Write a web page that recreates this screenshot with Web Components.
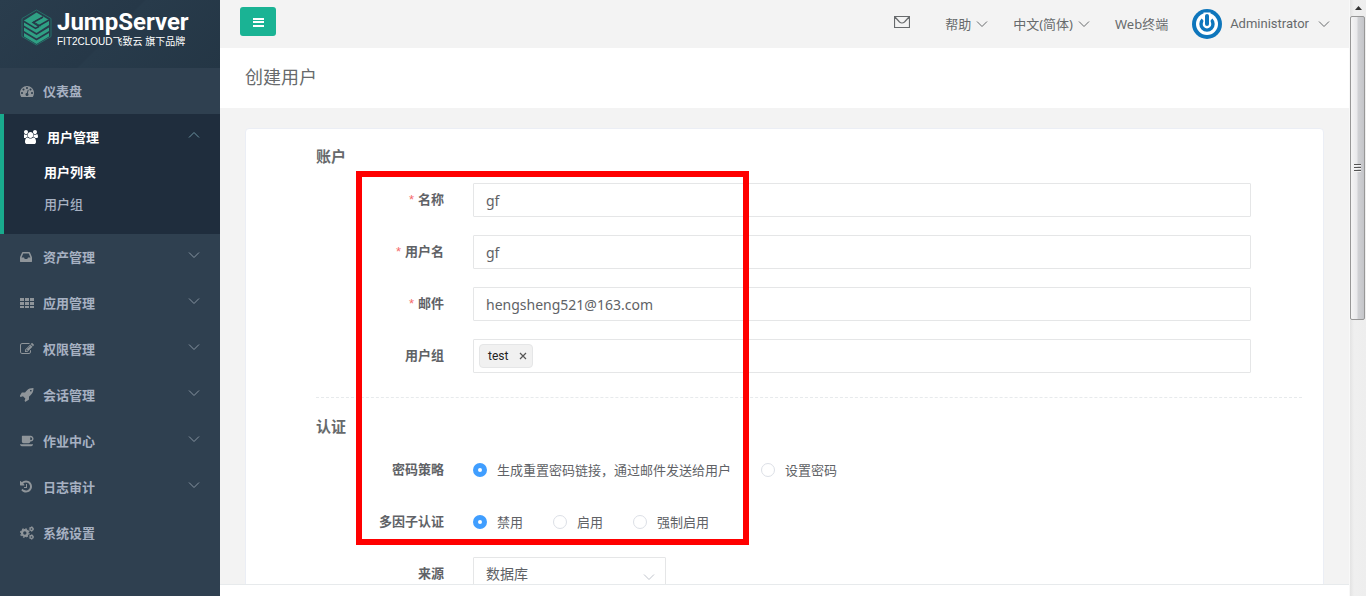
<!DOCTYPE html>
<html lang="zh-CN">
<head>
<meta charset="utf-8">
<title>创建用户 - JumpServer</title>
<style>
  html, body { margin: 0; height: 100%; }
  body {
    font: 13px/20px "Noto Sans", "Noto Sans CJK SC", sans-serif;
    color: #676a6c;
    overflow: hidden;
  }
</style>
</head>
<body>
<js-app></js-app>

<script>
const define = (name, html, init) => {
  const template = document.createElement('template');
  template.innerHTML = html;
  customElements.define(name, class extends HTMLElement {
    constructor() {
      super();
      this.attachShadow({ mode: 'open' }).append(template.content.cloneNode(true));
    }
    connectedCallback() {
      if (init && !this.ready) { this.ready = true; init(this, this.shadowRoot); }
    }
  });
};

/* Icon set: [viewBox, markup] */
const ICONS = {
  dashboard: ['0 0 1792 1792', '<path d="M384 1152q0-53-37.500-90.500t-90.500-37.500-90.500 37.500-37.500 90.500 37.500 90.500 90.500 37.500 90.500-37.500 37.500-90.500zm192-448q0-53-37.500-90.500t-90.500-37.500-90.500 37.500-37.500 90.500 37.500 90.500 90.500 37.500 90.500-37.500 37.500-90.500zm428 481l101-382q6-26-7.500-48.500t-38.500-29.500-48 6.500-30 39.500l-101 382q-60 5-107 43.500t-63 98.500q-20 77 20 146t117 89 146-20 89-117q16-60-6-117t-72-91zm660-33q0-53-37.500-90.500t-90.500-37.500-90.500 37.500-37.500 90.500 37.500 90.500 90.500 37.500 90.500-37.500 37.500-90.500zm-640-640q0-53-37.500-90.500t-90.500-37.500-90.500 37.500-37.500 90.500 37.500 90.500 90.500 37.500 90.500-37.500 37.500-90.500zm448 192q0-53-37.500-90.500t-90.500-37.500-90.500 37.500-37.500 90.500 37.500 90.500 90.500 37.500 90.500-37.500 37.500-90.500zm320 448q0 261-141 483-19 29-54 29h-1402q-35 0-54-29-141-221-141-483 0-182 71-348t191-286 286-191 348-71 348 71 286 191 191 286 71 348z"/>'],
  users: ['64 0 1792 1792', '<path d="M529 896q-162 5-265 128h-134q-82 0-138-40.500t-56-118.500q0-353 124-353 6 0 43.500 21t97.500 42.500 119 21.500q67 0 133-23-5 37-5 66 0 139 81 256zm1071 637q0 120-73 189.500t-194 69.500h-874q-121 0-194-69.500t-73-189.500q0-53 3.500-103.500t14-109 26.500-108.500 43-97.500 62-81 85.500-53.500 111.500-20q10 0 43 21.500t73 48 107 48 135 21.500 135-21.500 107-48 73-48 43-21.500q61 0 111.500 20t85.500 53.500 62 81 43 97.500 26.500 108.500 14 109 3.500 103.500zm-1024-1277q0 106-75 181t-181 75-181-75-75-181 75-181 181-75 181 75 75 181zm704 384q0 159-112.500 271.500t-271.500 112.500-271.500-112.500-112.500-271.500 112.500-271.500 271.500-112.500 271.500 112.500 112.500 271.500zm576 225q0 78-56 118.500t-138 40.500h-134q-103-123-265-128 81-117 81-256 0-29-5-66 66 23 133 23 59 0 119-21.500t97.500-42.500 43.500-21q124 0 124 353zm-128-609q0 106-75 181t-181 75-181-75-75-181 75-181 181-75 181 75 75 181z"/>'],
  inbox: ['128 0 1792 1792', '<path d="M1151 960h316q-1-3-2.500-8.500t-2.500-7.500l-212-496h-708l-212 496q-1 3-2.500 8.500t-2.500 7.500h316l95 192h320zm513 30v482q0 26-19 45t-45 19h-1408q-26 0-45-19t-19-45v-482q0-62 25-123l238-552q10-25 36.500-42t52.500-17h832q26 0 52.500 17t36.500 42l238 552q25 61 25 123z"/>'],
  grid: ['0 0 14 14', '<path d="M0 2h4v3H0zM5 2h4v3H5zM10 2h4v3h-4zM0 6h4v3H0zM5 6h4v3H5zM10 6h4v3h-4zM0 10h4v2H0zM5 10h4v2H5zM10 10h4v2h-4z"/>'],
  edit: ['0 0 1792 1792', '<path d="M888 1184l116-116-152-152-116 116v56h96v96h56zm440-720q-16-16-33 1l-350 350q-17 17-1 33t33-1l350-350q17-17 1-33zm80 594v190q0 119-84.500 203.500t-203.500 84.500h-832q-119 0-203.500-84.500t-84.500-203.500v-832q0-119 84.500-203.500t203.500-84.500h832q63 0 117 25 15 7 18 23 3 17-9 29l-49 49q-14 14-32 8-23-6-45-6h-832q-66 0-113 47t-47 113v832q0 66 47 113t113 47h832q66 0 113-47t47-113v-126q0-13 9-22l64-64q15-15 35-7t20 29zm-96-738l288 288-672 672h-288v-288zm444 132l-92 92-288-288 92-92q28-28 68-28t68 28l152 152q28 28 28 68t-28 68z"/>'],
  rocket: ['60 128 1664 1664', '<path d="M1440 448q0-40-28-68t-68-28-68 28-28 68 28 68 68 28 68-28 28-68zm224-288q0 249-75.500 430.500t-253.500 360.500q-81 80-195 176l-20 379q-2 16-16 26l-384 224q-7 4-16 4-12 0-23-9l-64-64q-13-14-8-32l85-276-281-281-276 85q-3 1-9 1-14 0-23-9l-64-64q-17-19-5-39l224-384q10-14 26-16l379-20q96-114 176-195 188-187 358-258t431-71q14 0 24 9.500t10 22.500z"/>'],
  coffee: ['0 64 1920 1792', '<path d="M1664 640q0-80-56-136t-136-56h-64v384h64q80 0 136-56t56-136zm-1664 768h1792q0 106-75 181t-181 75h-1280q-106 0-181-75t-75-181zm1856-768q0 159-112.500 271.500t-271.500 112.500h-64v32q0 92-66 158t-158 66h-704q-92 0-158-66t-66-158v-736q0-26 19-45t45-19h1152q159 0 271.500 112.500t112.500 271.500z"/>'],
  history: ['128 64 1792 1792', '<path d="M1664 896q0 156-61 298t-164 245-245 164-298 61q-172 0-327-72.500t-264-204.500q-7-10-6.500-22.500t8.500-20.500l137-138q10-9 25-9 16 2 23 12 73 95 179 147t225 52q104 0 198.500-40.500t163.500-109.500 109.500-163.500 40.500-198.500-40.500-198.500-109.500-163.500-163.500-109.500-198.500-40.500q-98 0-188 35.500t-160 101.500l137 138q31 30 14 69-17 40-59 40h-448q-26 0-45-19t-19-45v-448q0-42 40-59 39-17 69 14l130 129q107-101 244.500-156.500t284.500-55.500q156 0 298 61t245 164 164 245 61 298zm-640-288v448q0 14-9 23t-23 9h-320q-14 0-23-9t-9-23v-64q0-14 9-23t23-9h224v-352q0-14 9-23t23-9h64q14 0 23 9t9 23z"/>'],
  cogs: ['0 0 14 14', '<g fill="none" stroke="currentColor"><circle cx="4.800" cy="7" r="2.800" stroke-width="2.200"/><circle cx="4.800" cy="7" r="4.200" stroke-width="1.300" stroke-dasharray="1.650 1.650"/><circle cx="11.500" cy="3" r="1.500" stroke-width="1.300"/><circle cx="11.500" cy="3" r="2.300" stroke-width=".8" stroke-dasharray="1.200 1.200"/><circle cx="11.500" cy="11" r="1.500" stroke-width="1.300"/><circle cx="11.500" cy="11" r="2.300" stroke-width=".8" stroke-dasharray="1.200 1.200"/></g>'],
  bars: ['0 0 14 14', '<path d="M2 3h11v2H2zM2 7h11v1H2zM2 6h11v2H2zM2 10h11v2H2z"/>'],
  down: ['0 0 14 14', '<path d="M2 4.500l5 5 5-5" fill="none" stroke="currentColor"/>'],
  up: ['0 0 14 14', '<path d="M2 9.500l5-5 5 5" fill="none" stroke="currentColor"/>'],
  close: ['0 0 14 14', '<path d="M4 4l6 6M10 4l-6 6" fill="none" stroke="currentColor" stroke-width="1.200"/>'],
  mail: ['0 0 16 12', '<path d="M.5 .5h15v11H.5zM1 1l4.500 5q2.500 2 5 0L15 1" fill="none" stroke="currentColor" stroke-width="1.200"/>']
};

define('js-icon', `
  <style>
    :host { display: block; flex: none; width: 14px; height: 14px; }
    svg { display: block; width: 100%; height: 100%; fill: currentColor; }
  </style>
  <svg aria-hidden="true"></svg>`,
  (el, root) => {
    const [box, markup] = ICONS[el.getAttribute('name')];
    const svg = root.querySelector('svg');
    svg.setAttribute('viewBox', box);
    svg.innerHTML = markup;
  });

define('js-brand', `
  <style>
    :host {
      display: block; height: 68px; color: #fff;
      background: linear-gradient(135deg, #2a3d4d 0%, #263848 50%, #283b4b 51%, #243645 100%);
    }
    a { display: flex; gap: 5px; padding: 9px 0 0 21px; color: inherit; text-decoration: none; }
    svg { flex: none; width: 31px; height: 37px; }
    .name { font: 700 24px/26px Roboto, sans-serif; }
    .tag { font: 10px/14px "Liberation Sans", "Noto Sans CJK SC", sans-serif; white-space: nowrap; }
  </style>
  <a href="#">
    <svg viewBox="0 0 31 37" aria-hidden="true">
      <path d="M15.500 1L30 9.500v18L15.500 36 1 27.500v-18z" fill="none" stroke="#256f68"/>
      <path d="M15.500 3.500L28 11v5L15.500 24 3 16.500v-5z" fill="#2fa084"/>
      <path d="M22 8l-10 5.500 6 4M18 17.500l-3.500 2L3 12.500M28 11l-10.500 6" fill="none" stroke="#263848" stroke-width="1.500"/>
      <path d="M22 8l-9.500 5 7 4" fill="none" stroke="#263848" stroke-width="1"/>
      <path d="M3 18.500L15.500 26 28 18.500v3.500l-12.500 7.500L3 22z" fill="#2fa084"/>
      <path d="M3 24l12.500 7.500L28 24v3.500L15.500 35 3 27.500z" fill="#2fa084"/>
    </svg>
    <div>
      <div class="name">JumpServer</div>
      <div class="tag">FIT2CLOUD飞致云 旗下品牌</div>
    </div>
  </a>`);

define('js-nav-item', `
  <style>
    :host { display: block; color: #a7b1c2; font-weight: 600; }
    :host([active]) { background: #1f2d3d; border-left: 4px solid #19aa8d; color: #fff; padding-bottom: 13px; }
    a { display: flex; align-items: center; height: 46px; padding: 0 19px 0 20px; color: inherit; text-decoration: none; }
    span { flex: 1; margin-left: 9px; line-height: 20px; }
    .lead { color: #8f959a; }
    :host([active]) .lead { color: #fff; }
    .arrow { color: #8794a1; margin-bottom: 4px; }
    :host([active]) .arrow { color: #6b93a1; }
    .sub { display: flex; flex-direction: column; margin-top: -3px; }
    :host(:not([active])) .sub { display: none; }
  </style>
  <a href="#"><span></span></a>
  <div class="sub"><slot></slot></div>`,
  (el, root) => {
    const link = root.querySelector('a');
    const icon = (cls, name) => {
      const node = document.createElement('js-icon');
      node.className = cls;
      node.setAttribute('name', name);
      return node;
    };
    root.querySelector('span').textContent = el.getAttribute('label');
    link.prepend(icon('lead', el.getAttribute('icon')));
    if (!el.hasAttribute('leaf')) link.append(icon('arrow', el.hasAttribute('active') ? 'up' : 'down'));
  });

define('js-nav-link', `
  <style>
    :host { display: block; color: #a7b1c2; font-weight: 500; }
    :host([current]) { color: #fff; font-weight: 700; }
    a { display: block; height: 32px; padding: 0 0 0 40px; line-height: 30px; color: inherit; text-decoration: none; }
  </style>
  <a href="#"><slot></slot></a>`);

define('js-sidebar', `
  <style>:host { display: block; background: #2f4050; overflow: hidden; } nav { display: block; }</style>
  <js-brand></js-brand>
  <nav>
    <js-nav-item icon="dashboard" label="仪表盘" leaf></js-nav-item>
    <js-nav-item icon="users" label="用户管理" active>
      <js-nav-link current>用户列表</js-nav-link>
      <js-nav-link>用户组</js-nav-link>
    </js-nav-item>
    <js-nav-item icon="inbox" label="资产管理"></js-nav-item>
    <js-nav-item icon="grid" label="应用管理"></js-nav-item>
    <js-nav-item icon="edit" label="权限管理"></js-nav-item>
    <js-nav-item icon="rocket" label="会话管理"></js-nav-item>
    <js-nav-item icon="coffee" label="作业中心"></js-nav-item>
    <js-nav-item icon="history" label="日志审计"></js-nav-item>
    <js-nav-item icon="cogs" label="系统设置" leaf></js-nav-item>
  </nav>`);

define('js-topbar', `
  <style>
    :host { display: flex; align-items: center; height: 48px; padding: 0 18px 0 20px; background: #f3f3f3; }
    button { font: inherit; color: inherit; border: 0; background: none; padding: 0; display: flex; align-items: center; gap: 4px; }
    .toggle { width: 36px; height: 29px; justify-content: center; border-radius: 3px; background: #1ab394; color: #fff; margin-bottom: 5px; }
    .menu { display: flex; align-items: center; gap: 24px; margin-left: auto; }
    .mail { width: 16px; height: 12px; margin: 0 11px 4px 0; }
    a { color: inherit; text-decoration: none; }
    .user { gap: 8px; font-family: Roboto, sans-serif; }
    .user svg { width: 30px; height: 30px; }
  </style>
  <button class="toggle" aria-label="菜单"><js-icon name="bars"></js-icon></button>
  <div class="menu">
    <button aria-label="消息"><js-icon class="mail" name="mail"></js-icon></button>
    <button>帮助<js-icon name="down"></js-icon></button>
    <button>中文(简体)<js-icon name="down"></js-icon></button>
    <a href="#">Web终端</a>
    <button class="user">
      <svg viewBox="0 0 30 30" aria-hidden="true">
        <circle cx="15" cy="15" r="15" fill="#0e76bc"/>
        <circle cx="15" cy="15" r="11" fill="#fff"/>
        <path d="M10.800 10.800a6 6 0 1 0 8.400 0" fill="none" stroke="#0e76bc" stroke-width="3.400"/>
        <path d="M11.500 3.500h7v11.500a3.500 3.500 0 0 1-7 0z" fill="#fff"/>
        <path d="M15 7v8" stroke="#0e76bc" stroke-width="4" stroke-linecap="round"/>
      </svg>
      Administrator<js-icon name="down"></js-icon>
    </button>
  </div>`);

define('js-section', `
  <style>
    :host { display: block; }
    :host([divided]) { border-top: 1px dashed #e7eaec; margin-top: 24px; padding-top: 16px; }
    h3 { margin: 0; height: 24px; font: inherit; font-size: 15px; line-height: 24px; font-weight: 600; }
    .rows { display: flex; flex-direction: column; gap: 18px; padding-top: 15px; }
  </style>
  <h3></h3>
  <div class="rows"><slot></slot></div>`,
  (el, root) => { root.querySelector('h3').textContent = el.getAttribute('heading'); });

/* One form row; the type attribute picks text, tags, radio or select. */
define('js-field', `
  <style>
    :host { display: grid; grid-template-columns: 128px 1fr; grid-template-rows: 34px; column-gap: 29px; margin-right: 51px; }
    .label { text-align: right; font-weight: 600; line-height: 32px; color: #606266; }
    .label i { font-style: normal; font-weight: 400; color: #f56c6c; margin-right: 4px; font-family: "Liberation Sans", sans-serif; }
    .box {
      box-sizing: border-box; width: 100%; height: 34px; border: 1px solid #e5e6e7; border-radius: 1px;
      background: #fff; color: #606266; font: 14px/32px "Noto Sans", "Noto Sans CJK SC", sans-serif;
      padding: 0 12px; outline: 0;
    }
    .tags { display: flex; align-items: center; gap: 6px; padding: 0 5px; }
    .tags input { flex: 1; min-width: 0; border: 0; outline: 0; background: none; }
    .tag {
      display: flex; align-items: center; gap: 8px; box-sizing: border-box; height: 24px; padding: 0 2px 0 8px;
      border: 1px solid #e5e6e7; border-radius: 4px; background: #f1f1f1; color: #222; font: 12px/22px Roboto, sans-serif;
    }
    .tag button { border: 0; background: none; padding: 0; color: #555; }
    .radios { display: flex; gap: 30px; }
    .radios label { display: flex; align-items: center; gap: 10px; color: #606266; white-space: nowrap; }
    .radios input {
      appearance: none; flex: none; box-sizing: border-box; width: 14px; height: 14px; margin: 0;
      border: 1px solid #dcdfe6; border-radius: 50%; background: #fff;
    }
    .radios input:checked { border: 5px solid #409eff; }
    .select { display: grid; width: 193px; align-items: center; }
    .select > * { grid-area: 1 / 1; }
    select { appearance: none; }
    .select js-icon { justify-self: end; margin: 5px 10px 0 0; color: #c0c4cc; pointer-events: none; }
  </style>
  <label class="label" id="l" for="c"></label>`,
  (el, root) => {
    const label = root.querySelector('.label');
    if (el.hasAttribute('required')) label.innerHTML = '<i>*</i>';
    label.append(el.getAttribute('label'));
    const value = el.getAttribute('value') || '';
    const type = el.getAttribute('type') || 'text';
    const views = {
      text: () => `<input class="box" id="c" value="${value}">`,
      tags: () => `<div class="box tags"><span class="tag">${value}<button type="button" aria-label="移除"><js-icon name="close"></js-icon></button></span><input id="c"></div>`,
      select: () => `<div class="select"><select class="box" id="c"><option>${value}</option></select><js-icon name="down"></js-icon></div>`,
      radio: () => `<div class="radios" id="c" role="radiogroup" aria-labelledby="l">` +
        value.split('|').map((v, i) => `<label><input type="radio" name="r"${i ? '' : ' checked'}>${v}</label>`).join('') + `</div>`
    };
    label.insertAdjacentHTML('afterend', views[type]());
  });

define('js-user-form', `
  <style>
    :host {
      display: block; position: relative; margin: 20px 25px 0 25px; padding: 15px 21px 40px 70px;
      background: #fff; border: 1px solid #ebeef5; border-radius: 4px;
    }
    .mark { position: absolute; left: 110px; top: 42px; width: 381px; height: 362px; border: 6px solid #f00; pointer-events: none; }
  </style>
  <form>
    <js-section heading="账户">
      <js-field label="名称" value="gf" required></js-field>
      <js-field label="用户名" value="gf" required></js-field>
      <js-field label="邮件" value="hengsheng521@163.com" required></js-field>
      <js-field label="用户组" type="tags" value="test"></js-field>
    </js-section>
    <js-section heading="认证" divided>
      <js-field label="密码策略" type="radio" value="生成重置密码链接，通过邮件发送给用户|设置密码"></js-field>
      <js-field label="多因子认证" type="radio" value="禁用|启用|强制启用"></js-field>
      <js-field label="来源" type="select" value="数据库"></js-field>
    </js-section>
  </form>
  <div class="mark"></div>`);

define('js-scrollbar', `
  <style>
    :host { display: flex; flex-direction: column; border-left: 1px solid #f8f8f8; background: linear-gradient(90deg, #e3e3e3, #efefef 4px, #eee); }
    .up { height: 16px; display: grid; place-items: center; }
    .up svg { width: 7px; height: 4px; }
    .thumb {
      box-sizing: border-box; height: 51%; border: 1px solid #979797; border-radius: 2px; margin-right: 1px;
      background: linear-gradient(90deg, #f5f5f5, #e9e9eb 45%, #d0d1d4 55%, #c4c5c9);
      display: grid; place-items: center;
    }
    .thumb svg { width: 7px; height: 8px; }
  </style>
  <div class="up"><svg viewBox="0 0 7 4"><path d="M0 4l3.500-4L7 4z" fill="#333"/></svg></div>
  <div class="thumb"><svg viewBox="0 0 7 8"><path d="M0 .5h7M0 3.500h7M0 6.500h7" stroke="#555"/><path d="M0 1.500h7M0 4.500h7M0 7.500h7" stroke="#f4f4f4"/></svg></div>`);

define('js-app', `
  <style>
    :host { display: grid; grid-template-columns: 220px minmax(0, 1fr) 17px; height: 100vh; }
    main { display: flex; flex-direction: column; min-height: 0; background: #f3f3f3; }
    h1 { margin: 0; padding: 0 25px 2px; background: #fff; font: inherit; font-size: 18px; line-height: 58px; flex: none; }
    .content { flex: 1; min-height: 0; overflow: hidden; }
    footer { flex: none; height: 11px; border-top: 1px solid #e7eaec; background: #fff; }
    js-topbar { flex: none; }
  </style>
  <js-sidebar></js-sidebar>
  <main>
    <js-topbar></js-topbar>
    <h1>创建用户</h1>
    <div class="content"><js-user-form></js-user-form></div>
    <footer></footer>
  </main>
  <js-scrollbar></js-scrollbar>`);
</script>
</body>
</html>
